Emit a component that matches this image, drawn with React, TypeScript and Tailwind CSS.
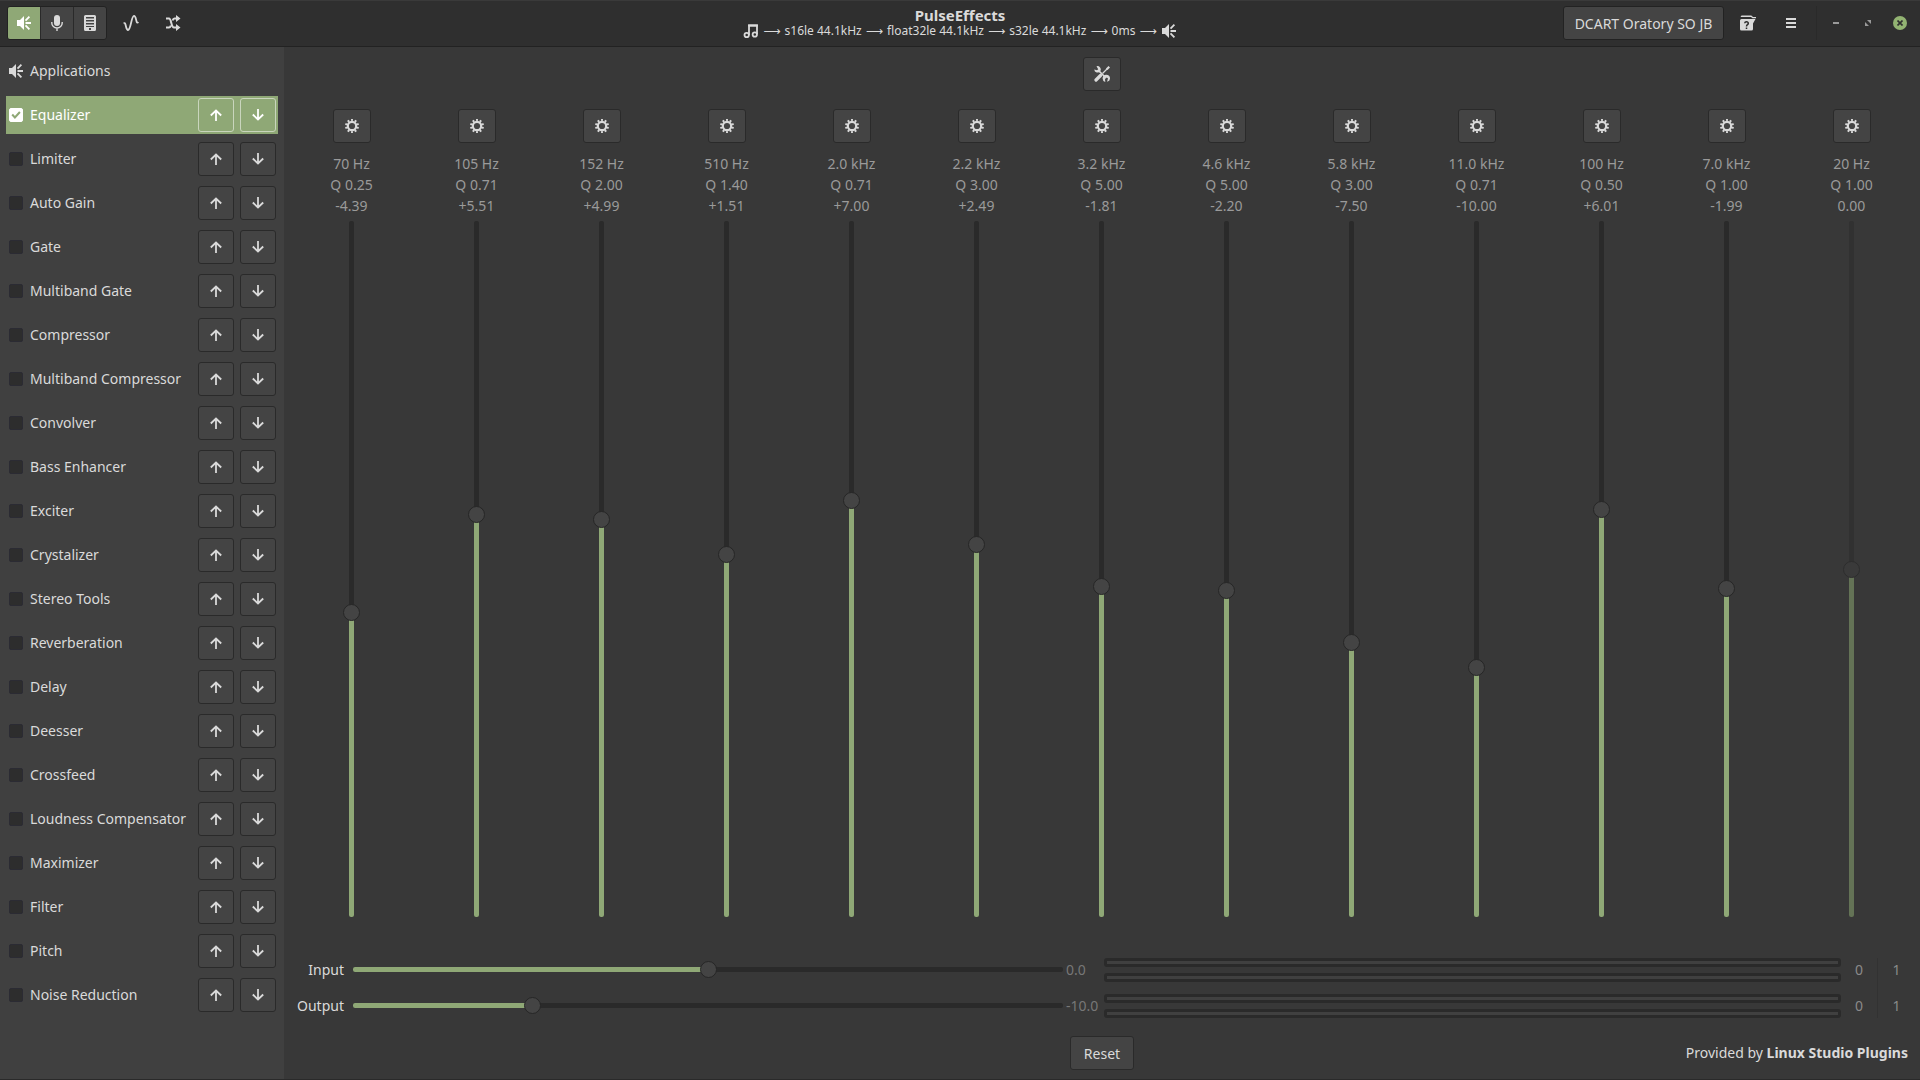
import { useState } from "react";

type Plugin = { name: string; enabled?: boolean };

const PLUGINS: Plugin[] = [
  { name: "Equalizer", enabled: true },
  { name: "Limiter" },
  { name: "Auto Gain" },
  { name: "Gate" },
  { name: "Multiband Gate" },
  { name: "Compressor" },
  { name: "Multiband Compressor" },
  { name: "Convolver" },
  { name: "Bass Enhancer" },
  { name: "Exciter" },
  { name: "Crystalizer" },
  { name: "Stereo Tools" },
  { name: "Reverberation" },
  { name: "Delay" },
  { name: "Deesser" },
  { name: "Crossfeed" },
  { name: "Loudness Compensator" },
  { name: "Maximizer" },
  { name: "Filter" },
  { name: "Pitch" },
  { name: "Noise Reduction" },
];

type Band = { freq: string; q: string; gain: number; off?: boolean };

const BANDS: Band[] = [
  { freq: "70 Hz", q: "0.25", gain: -4.39 },
  { freq: "105 Hz", q: "0.71", gain: 5.51 },
  { freq: "152 Hz", q: "2.00", gain: 4.99 },
  { freq: "510 Hz", q: "1.40", gain: 1.51 },
  { freq: "2.0 kHz", q: "0.71", gain: 7 },
  { freq: "2.2 kHz", q: "3.00", gain: 2.49 },
  { freq: "3.2 kHz", q: "5.00", gain: -1.81 },
  { freq: "4.6 kHz", q: "5.00", gain: -2.2 },
  { freq: "5.8 kHz", q: "3.00", gain: -7.5 },
  { freq: "11.0 kHz", q: "0.71", gain: -10 },
  { freq: "100 Hz", q: "0.50", gain: 6.01 },
  { freq: "7.0 kHz", q: "1.00", gain: -1.99 },
  { freq: "20 Hz", q: "1.00", gain: 0, off: true },
];

const BAND_LIMIT = 34.5;
const LEVEL_LIMIT = 20;

const BUTTON =
  "grid shrink-0 place-items-center rounded-[3px] border border-[#2a2a2a] bg-[#444444] text-[#dadada]";

const THUMB =
  "[&::-webkit-slider-thumb]:size-[17px] [&::-webkit-slider-thumb]:appearance-none [&::-webkit-slider-thumb]:rounded-full [&::-webkit-slider-thumb]:border [&::-webkit-slider-thumb]:border-[#262626] [&::-webkit-slider-thumb]:bg-[#444444]";

const THUMB_OFF =
  "[&::-webkit-slider-thumb]:size-[17px] [&::-webkit-slider-thumb]:appearance-none [&::-webkit-slider-thumb]:rounded-full [&::-webkit-slider-thumb]:border [&::-webkit-slider-thumb]:border-[#2d2d2d] [&::-webkit-slider-thumb]:bg-[#3a3a3a]";

function SpeakerIcon() {
  return (
    <svg width="16" height="16" viewBox="0 0 16 16" fill="none" aria-hidden="true">
      <path d="M1 5h3l4-4v14l-4-4H1z" fill="currentColor" />
      <path d="M9.5 8H15M9.5 5.6l3.9-4M9.5 10.4l3.9 4" stroke="currentColor" strokeWidth="1.8" />
    </svg>
  );
}

function MicIcon() {
  return (
    <svg width="16" height="16" viewBox="0 0 16 16" fill="none" aria-hidden="true">
      <rect x="5" y="0" width="6" height="11" rx="3" fill="currentColor" />
      <path d="M2.8 7v1a5.2 5 0 0 0 10.4 0V7M8 13v3" stroke="currentColor" strokeWidth="1.4" />
    </svg>
  );
}

function ServerIcon() {
  return (
    <svg width="16" height="16" viewBox="0 0 16 16" aria-hidden="true">
      <path
        fill="currentColor"
        fillRule="evenodd"
        d="M3.5 0h9A1.5 1.5 0 0 1 14 1.5v13a1.5 1.5 0 0 1-1.5 1.5h-9A1.5 1.5 0 0 1 2 14.5v-13A1.5 1.5 0 0 1 3.5 0zM4 2v1.5h8V2zM4 5v1.5h8V5zM4 8v1.5h8V8zM4 11v1h8v-1zM7 13v2h2v-2z"
      />
    </svg>
  );
}

function WaveIcon() {
  return (
    <svg width="16" height="16" viewBox="0 0 16 16" fill="none" aria-hidden="true">
      <path
        d="M.7 8.6C1.2 7.9 2 8 2.4 9.3C3.2 12 3.4 15 5 15C8 15 8.2 .9 11 .9C12.800 .9 13 5 13.700 6.800C14.100 7.800 14.800 7.900 15.300 7"
        stroke="currentColor"
        strokeWidth="1.8"
      />
    </svg>
  );
}

function ShuffleIcon() {
  return (
    <svg width="16" height="16" viewBox="0 0 16 16" fill="none" aria-hidden="true">
      <path
        d="M1 3.5h3c2.5 0 2 9 5 9h3M1 12.5h3c1 0 1.5-.8 1.8-2M7.6 5.5c.4-1.3.8-2 1.9-2H12"
        stroke="currentColor"
        strokeWidth="2"
      />
      <path d="M11 0l4.5 3.5L11 7zM11 9l4.5 3.5L11 16z" fill="currentColor" />
    </svg>
  );
}

function NotesIcon() {
  return (
    <svg width="16" height="16" viewBox="0 0 16 16" fill="none" aria-hidden="true">
      <path d="M6 12V2.5h8V11" stroke="currentColor" strokeWidth="1.8" />
      <path d="M5.1 1.500h9.800v2H5.100z" fill="currentColor" />
      <circle cx="3.7" cy="12" r="2.2" stroke="currentColor" strokeWidth="1.8" />
      <circle cx="11.8" cy="11.5" r="2.2" stroke="currentColor" strokeWidth="1.8" />
    </svg>
  );
}

function HelpIcon() {
  return (
    <svg width="16" height="16" viewBox="0 0 16 16" fill="none" aria-hidden="true">
      <path d="M1.500 .5h9.500c1 0 1 1 2 1.500h3v1.200h-3.500L11 2H.5z" fill="currentColor" />
      <path d="M1.500 4h14L13 8.500V14a1.500 1.500 0 0 1-1.500 1.500h-10A1.500 1.500 0 0 1 0 14V5.500A1.500 1.500 0 0 1 1.500 4z" fill="currentColor" />
      <path
        d="M4.700 8.300c.2-2 3.800-1.900 3.600.1C8.200 9.700 6.500 9.600 6.500 11.400M6.500 12.400v1.600"
        stroke="#2f2f2f"
        strokeWidth="1.5"
      />
    </svg>
  );
}

function GearIcon() {
  return (
    <svg width="14" height="14" viewBox="0 0 14 14" fill="none" aria-hidden="true">
      <circle cx="7" cy="7" r="4.2" stroke="currentColor" strokeWidth="2.2" />
      <circle
        cx="7"
        cy="7"
        r="6"
        stroke="currentColor"
        strokeWidth="2"
        pathLength="20"
        strokeDasharray="1 1"
        strokeDashoffset="0.5"
        transform="rotate(-90 7 7)"
      />
    </svg>
  );
}

function ToolsIcon() {
  return (
    <svg width="16" height="16" viewBox="0 0 16 16" fill="none" aria-hidden="true">
      <path d="M13.5 2.5L8.5 7.5" stroke="currentColor" strokeWidth="1.3" />
      <path d="M12 2.5L14.5 0L16 1.500L13.500 4z" fill="currentColor" />
      <path d="M6.500 9.500L2 14" stroke="currentColor" strokeWidth="3.200" strokeLinecap="round" />
      <path d="M5 5l6.500 6.500" stroke="currentColor" strokeWidth="1.700" />
      <path
        d="M2.5.2A3.4 3.4 0 0 1 6.3 5.2A3.4 3.4 0 0 1 .2 3.5L3 4.3L4.2 3.2z"
        fill="currentColor"
      />
      <path
        d="M15.9 11.5A3.7 3.7 0 1 0 11.3 15.9L11 13L12.8 11.6L14 12.5L13 15.8A3.7 3.7 0 0 0 15.9 11.5z"
        fill="currentColor"
      />
    </svg>
  );
}

function ArrowIcon({ down = false }: { down?: boolean }) {
  return (
    <svg width="12" height="12" viewBox="0 0 12 12" fill="none" aria-hidden="true">
      <path
        d={down ? "M6 0v10.5M.8 5.5l5.2 5l5.2-5" : "M6 12V1.5M.8 6.5l5.2-5l5.2 5"}
        stroke="currentColor"
        strokeWidth="1.8"
      />
    </svg>
  );
}

function TitleBar() {
  return (
    <header className="grid h-[47px] shrink-0 grid-cols-[1fr_auto_1fr] items-center border-y border-t-[#3a3a3a] border-b-[#222222] bg-[#2f2f2f] pb-px text-[#dadada]">
      <div className="flex items-center pl-[7px]">
        <div className="flex h-[34px] overflow-hidden rounded-[3px] border border-[#222222] bg-[#444444]">
          <button type="button" aria-label="Output effects" className="grid w-8 place-items-center bg-[#8fa876] text-white">
            <SpeakerIcon />
          </button>
          <button type="button" aria-label="Input effects" className="grid w-[33px] place-items-center border-l border-[#2a2a2a]">
            <MicIcon />
          </button>
          <button type="button" aria-label="Server info" className="grid w-[33px] place-items-center border-l border-[#2a2a2a]">
            <ServerIcon />
          </button>
        </div>
        <button type="button" aria-label="Spectrum" className="ml-[6px] grid h-[34px] w-9 place-items-center">
          <WaveIcon />
        </button>
        <button type="button" aria-label="Bypass" className="ml-[6px] grid h-[34px] w-9 place-items-center">
          <ShuffleIcon />
        </button>
      </div>

      <div className="flex flex-col items-center">
        <h1 className="text-[15px] leading-4 font-bold">PulseEffects</h1>
        <p className="flex items-center gap-1 text-[12px] leading-4">
          <NotesIcon />
          <span>⟶</span>
          <span>s16le 44.1kHz</span>
          <span>⟶</span>
          <span>float32le 44.1kHz</span>
          <span>⟶</span>
          <span>s32le 44.1kHz</span>
          <span>⟶</span>
          <span>0ms</span>
          <span>⟶</span>
          <SpeakerIcon />
        </p>
      </div>

      <div className="flex items-center justify-end pr-[13px]">
        <button
          type="button"
          className="h-[34px] w-[161px] rounded-[3px] border border-[#222222] bg-[#444444] text-[14px] whitespace-nowrap"
        >
          DCART Oratory SO JB
        </button>
        <button type="button" aria-label="Help" className="ml-[6px] grid h-[34px] w-9 place-items-center">
          <HelpIcon />
        </button>
        <button type="button" aria-label="Menu" className="ml-[6px] grid h-[34px] w-[38px] place-items-center">
          <svg width="10" height="10" viewBox="0 0 10 10" aria-hidden="true">
            <path d="M0 0h10v2H0zM0 4h10v2H0zM0 8h10v2H0z" fill="currentColor" />
          </svg>
        </button>
        <div className="ml-[6px] flex h-[34px] items-center gap-[18px] border-l border-[#2a2a2a] pl-3 text-[#9a9a9a]">
          <button type="button" aria-label="Minimize" className="grid size-[14px] place-items-center">
            <svg width="6" height="2" viewBox="0 0 6 2" aria-hidden="true">
              <path d="M0 0h6v2H0z" fill="currentColor" />
            </svg>
          </button>
          <button type="button" aria-label="Restore" className="grid size-[14px] place-items-center">
            <svg width="6" height="6" viewBox="0 0 6 6" aria-hidden="true">
              <path d="M2 0h4v4zM0 2v4h4z" fill="currentColor" />
            </svg>
          </button>
          <button
            type="button"
            aria-label="Close"
            className="grid size-[14px] place-items-center rounded-full bg-[#92b372] text-[#2f2f2f]"
          >
            <svg width="6" height="6" viewBox="0 0 6 6" aria-hidden="true">
              <path d="M.5.5l5 5M5.5.5l-5 5" stroke="currentColor" strokeWidth="1.6" />
            </svg>
          </button>
        </div>
      </div>
    </header>
  );
}

function PluginRow({
  active,
  checked,
  name,
  onToggle,
}: {
  active: boolean;
  checked: boolean;
  name: string;
  onToggle: () => void;
}) {
  const button = active
    ? "grid h-[34px] w-9 shrink-0 place-items-center rounded-[3px] border border-[#c9d5bd] text-white"
    : `${BUTTON} h-[34px] w-9`;

  return (
    <li
      className={`flex h-[38px] items-center gap-[6px] pr-[2px] pl-[3px] ${
        active ? "bg-[#8fa876] text-white" : "text-[#dadada]"
      }`}
    >
      <label className="flex min-w-0 flex-1 items-center gap-[7px] whitespace-nowrap">
        <span className="grid shrink-0 place-items-center">
          <input
            type="checkbox"
            checked={checked}
            onChange={onToggle}
            className="col-start-1 row-start-1 size-[14px] appearance-none rounded-[2px] border border-[#2b2b33] bg-[#2d2d2d] checked:border-white checked:bg-white"
          />
          {checked && (
            <svg className="pointer-events-none col-start-1 row-start-1" width="10" height="8" viewBox="0 0 10 8" fill="none" aria-hidden="true">
              <path d="M1.2 3.5l2.7 3l5-5.5" stroke="#8fa876" strokeWidth="2" />
            </svg>
          )}
        </span>
        <span className="pb-[2px]">{name}</span>
      </label>
      <button type="button" aria-label={`Move ${name} up`} className={button}>
        <ArrowIcon />
      </button>
      <button type="button" aria-label={`Move ${name} down`} className={button}>
        <ArrowIcon down />
      </button>
    </li>
  );
}

function Sidebar() {
  const [enabled, setEnabled] = useState(() => PLUGINS.map((plugin) => Boolean(plugin.enabled)));

  return (
    <aside className="w-[284px] shrink-0 bg-[#404040] px-[6px] text-[14px] text-[#dadada]">
      <div className="flex h-[49px] items-center gap-[6px] pb-px pl-[2px]">
        <SpeakerIcon />
        <span className="pb-[2px]">Applications</span>
      </div>
      <ul className="flex flex-col gap-[6px]">
        {PLUGINS.map((plugin, index) => (
          <PluginRow
            key={plugin.name}
            active={index === 0}
            checked={enabled[index]}
            name={plugin.name}
            onToggle={() => setEnabled(enabled.map((on, i) => (i === index ? !on : on)))}
          />
        ))}
      </ul>
    </aside>
  );
}

function BandColumn({ band }: { band: Band }) {
  const [gain, setGain] = useState(band.gain);
  const sign = gain > 0 ? "+" : "";

  return (
    <div className="flex min-w-0 flex-col items-center">
      <button type="button" aria-label={`${band.freq} settings`} className={`${BUTTON} h-[34px] w-[38px]`}>
        <GearIcon />
      </button>
      <div className="mt-[10px] text-center leading-[21px] whitespace-nowrap text-[#9a9a9a]">
        <p>{band.freq}</p>
        <p>Q {band.q}</p>
        <p>
          {sign}
          {gain.toFixed(2)}
        </p>
      </div>
      <div className="mt-[5px] grid min-h-[240px] flex-1 justify-items-center">
        <div
          className={`col-start-1 row-start-1 flex w-[5px] flex-col justify-end overflow-hidden rounded-[2px] ${
            band.off ? "bg-[#313131]" : "bg-[#2a2a2a]"
          }`}
        >
          <div
            className={band.off ? "bg-[#647356]" : "bg-[#8fa876]"}
            style={{ height: `${((gain + BAND_LIMIT) / (2 * BAND_LIMIT)) * 100}%` }}
          />
        </div>
        <input
          type="range"
          aria-label={`${band.freq} gain`}
          min={-BAND_LIMIT}
          max={BAND_LIMIT}
          step={0.01}
          value={gain}
          onChange={(e) => setGain(Number(e.target.value))}
          className={`col-start-1 row-start-1 h-full w-[17px] appearance-none bg-transparent [direction:rtl] [writing-mode:vertical-lr] ${
            band.off ? THUMB_OFF : THUMB
          }`}
        />
      </div>
    </div>
  );
}

function LevelMeter() {
  return (
    <div className="flex flex-col justify-between">
      <div className="h-[9px] rounded-[3px] border-3 border-[#2a2a2a] bg-[#404040]" />
      <div className="h-[9px] rounded-[3px] border-3 border-[#2a2a2a] bg-[#404040]" />
    </div>
  );
}

function LevelRow({ id, label, initial }: { id: string; label: string; initial: number }) {
  const [level, setLevel] = useState(initial);

  return (
    <>
      <label htmlFor={id} className="text-right leading-6 text-[#dadada]">
        {label}
      </label>
      <div className="mr-[3px] ml-[9px] grid items-center justify-items-center pb-px">
        <div className="col-start-1 row-start-1 h-[5px] w-full overflow-hidden rounded-[2px] bg-[#2a2a2a]">
          <div
            className="h-full bg-[#8fa876]"
            style={{ width: `${((level + LEVEL_LIMIT) / (2 * LEVEL_LIMIT)) * 100}%` }}
          />
        </div>
        <input
          id={id}
          type="range"
          min={-LEVEL_LIMIT}
          max={LEVEL_LIMIT}
          step={0.1}
          value={level}
          onChange={(e) => setLevel(Number(e.target.value))}
          className={`col-start-1 row-start-1 h-[17px] w-[calc(100%+8px)] appearance-none bg-transparent ${THUMB}`}
        />
      </div>
      <span className="leading-6 text-[#777777]">{level.toFixed(1)}</span>
      <LevelMeter />
      <span className="text-center leading-6 text-[#8a8a8a]">0</span>
    </>
  );
}

function Equalizer() {
  return (
    <main className="flex min-w-0 flex-1 flex-col text-[14px] text-[#dadada]">
      <div className="flex justify-center pt-[10px] pb-[18px]">
        <button type="button" aria-label="Equalizer settings" className={`${BUTTON} h-[34px] w-[38px]`}>
          <ToolsIcon />
        </button>
      </div>
      <section className="grid flex-1 grid-cols-13 pr-[6px] pl-[5px]">
        {BANDS.map((band) => (
          <BandColumn key={band.freq} band={band} />
        ))}
      </section>
      <section className="mt-[41px] flex pr-[5px] pl-3">
        <div className="grid flex-1 grid-cols-[48px_722fr_38px_737fr_36px] gap-y-3">
          <LevelRow id="input-level" label="Input" initial={0} />
          <LevelRow id="output-level" label="Output" initial={-10} />
        </div>
        <div className="flex w-[38px] flex-col gap-3 border-l border-[#323232] text-center leading-6 text-[#8a8a8a]">
          <span>1</span>
          <span>1</span>
        </div>
      </section>
      <footer className="mt-[18px] grid grid-cols-[1fr_auto_1fr] items-center pb-[9px]">
        <button type="button" className={`${BUTTON} col-start-2 h-[34px] w-16`}>
          Reset
        </button>
        <p className="pr-3 pb-[2px] text-right">
          Provided by <b>Linux Studio Plugins</b>
        </p>
      </footer>
    </main>
  );
}

export default function App() {
  return (
    <div className="flex min-h-screen flex-col border-b border-[#2a2a2a] bg-[#383838] font-['Noto_Sans','DejaVu_Sans',sans-serif]">
      <TitleBar />
      <div className="flex flex-1">
        <Sidebar />
        <Equalizer />
      </div>
    </div>
  );
}
